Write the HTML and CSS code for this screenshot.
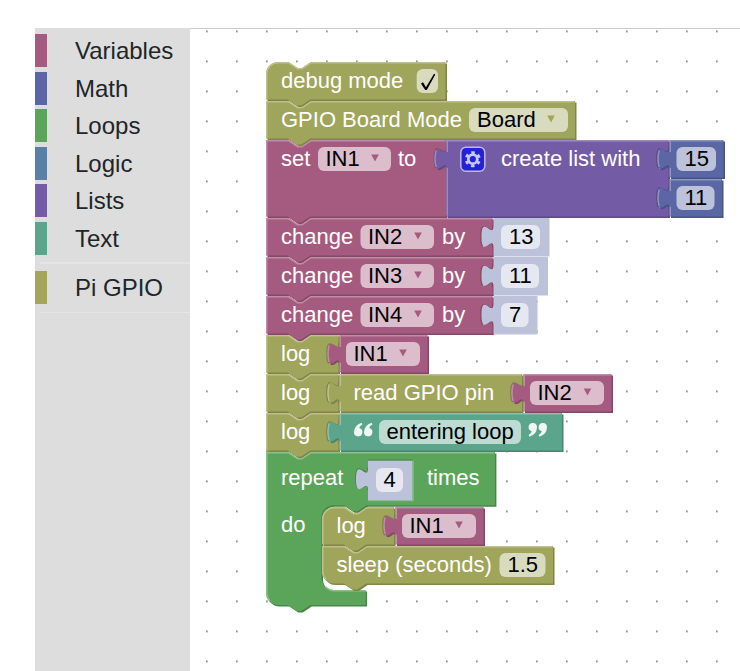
FILE: index.html
```html
<!DOCTYPE html>
<html lang="en">
<head>
<meta charset="utf-8">
<title>Pi GPIO Blocks</title>
<link rel="stylesheet" href="styles.css">
</head>
<body>
<main class="editor">
  <nav class="toolbox">
    <div class="category variables">Variables</div>
    <div class="category math">Math</div>
    <div class="category loops">Loops</div>
    <div class="category logic">Logic</div>
    <div class="category lists">Lists</div>
    <div class="category text">Text</div>
    <div class="separator"></div>
    <div class="category gpio">Pi GPIO</div>
    <div class="separator end"></div>
  </nav>
  <svg class="workspace" id="workspace" width="550" height="642" viewBox="190 29 550 642">
    <defs>
      <pattern id="grid" x="206" y="30.5" width="30" height="30" patternUnits="userSpaceOnUse">
        <rect class="dot" width="1.7" height="1.7"/>
      </pattern>
    </defs>
    <rect x="190" y="29" width="550" height="642" fill="url(#grid)"/>
  </svg>
</main>
<script src="blocks.js"></script>
</body>
</html>
```
FILE: styles.css
```css
body {
  margin: 0;
  background: #fff;
  font-family: "Liberation Sans", Arial, sans-serif;
}
.editor {
  display: flex;
  box-sizing: border-box;
  height: 671px;
  padding: 28px 0 0 35px;
  overflow: hidden;
}
.toolbox {
  display: flex;
  flex-direction: column;
  box-sizing: border-box;
  width: 155px;
  flex: none;
  padding-top: 6px;
  background: #ddd;
}
.category {
  box-sizing: border-box;
  height: 33px;
  margin-bottom: 4.5px;
  padding-left: 28px;
  border-left: 12px solid;
  font-size: 24px;
  line-height: 33px;
  white-space: nowrap;
  color: #212529;
}
.variables { border-color: #a55b80; }
.math { border-color: #5b67a5; }
.loops { border-color: #5ba55b; }
.logic { border-color: #5b80a5; }
.lists { border-color: #745ba5; }
.text { border-color: #5ba58c; }
.gpio { border-color: #a5a55b; }
.separator {
  height: 2px;
  margin: 3px 0 7px 5px;
  background: #e5e5e5;
}
.separator.end {
  height: 1px;
}
.workspace {
  display: block;
  flex: none;
  border-top: 1px solid #ccc;
}
.dot { fill: #808080; }
.label, .value { font-size: 22px; }
.label { fill: #fff; }
.value { fill: #000; }
.field { fill: #fff; fill-opacity: .6; }
.light { fill: none; stroke-width: 1; }
.tick { fill: #000; }
.gear-box { fill: #2222dd; stroke: #c1b7d8; stroke-width: 1.5; }
.gear { fill: none; stroke: #c9c8f3; }
.quote { fill: #fff; fill-opacity: .9; }
```
FILE: blocks.js
```js
const NS = "http://www.w3.org/2000/svg";
const workspace = document.getElementById("workspace");

// Each hue: body, lower-right shade, upper-left highlight
const HUES = {
  gpio: ["#9fa55b", "#7f8449", "#bcc08c"],
  vars: ["#a55b80", "#844966", "#c08ca6"],
  math: ["#5b67a5", "#495284", "#8c95c0"],
  lists: ["#745ba5", "#5d4984", "#9e8cc0"],
  text: ["#5ba58c", "#498470", "#8cc0ae"],
  loops: ["#5ba55b", "#498449", "#8cc08c"],
  shadow: ["#bdc2db", null, "#bdc2db"]
};

function add(tag, attrs, text) {
  const el = document.createElementNS(NS, tag);
  for (const key in attrs) el.setAttribute(key, attrs[key]);
  if (text) el.textContent = text;
  workspace.appendChild(el);
  return el;
}

// Block outlines are in block units, one unit is 1.5px
function shape(hue, x, y, body, light) {
  const [fill, dark, bright] = HUES[hue];
  const at = `translate(${x} ${y}) scale(1.5)`;
  if (dark) add("path", { d: body, fill: dark, transform: at + " translate(1 1)" });
  add("path", { d: body, fill: fill, transform: at });
  if (dark) add("path", { d: light, class: "light", stroke: bright, transform: at });
}

const NOTCH = "l 6,4 3,0 6,-4";
const NOTCH_BACK = "H 29.5 l -6,4 -3,0 -6,-4";

function statement(hue, x, y, right, h = 25, round = "") {
  const w = (right - x) / 1.5 - 1;
  const start = round.includes("t") ? "M 0,8 A 8,8 0 0,1 8,0" : "M 0,0";
  const end = round.includes("b") ? `H 8 a 8,8 0 0,1 -8,-8 z` : "H 0 z";
  const edge = round.includes("t")
    ? `M 0.5,${h - 0.5} V 8 A 7.5,7.5 0 0,1 8,0.5`
    : `M 0.5,${h - 0.5} V 0.5`;
  shape(hue, x, y, `${start} H 15 ${NOTCH} H ${w} v ${h} ${NOTCH_BACK} ${end}`,
    `${round.includes("b") ? `M 2.7,${h - 2.7} A 7.5,7.5 0 0,1 0.5,${h - 8} V 0.5` : edge} H 15 ${NOTCH} H ${w - 0.5}`);
}

// Recess in the parent, drawn beneath a plugged-in value block
function socket(hue, x, y) {
  const [, dark, bright] = HUES[hue];
  const at = `translate(${x - 0.6} ${y}) scale(1.5)`;
  add("path", { d: "M 0,5 c 0,10 -8,-8 -8,7.5 s 8,-2.5 8,7.5", class: "light", stroke: dark, transform: at });
  add("path", { d: "M -6.6,19.3 l 3.7,-2.1", class: "light", stroke: bright, transform: at });
}

function value(hue, x, y, right, h = 25) {
  const shadow = hue === "shadow";
  const w = (right - x) / 1.5 - (shadow ? 0 : 1);
  const height = shadow ? h + 0.7 : h;
  const body = `M 0,0 H ${w} v ${height} H 0 V 20 c 0,-10 -8,8 -8,-7.5 s 8,2.5 8,-7.5 z`;
  shape(hue, x, y, body,
    `M 0.5,${h - 0.5} V 18.5 m -7.4,-0.5 q -1.5,-5.5 0,-11 m 7.4,1 V 0.5 H ${w - 0.5}`);
}

function label(x, y, text) { add("text", { x, y, class: "label" }, text); }

function field(x, right, y, text, tx, arrow, color = "#a55b80") {
  add("rect", { x, y, width: right - x, height: 24, rx: 6, class: "field" });
  if (text) add("text", { x: tx, y: y + 19, class: "value" }, text);
  if (arrow) add("path", { d: `M ${arrow - 3.8},${y + 7.5} h 7.6 l -3.8,7 z`, fill: color });
}

// debug mode
statement("gpio", 266, 62, 447, 25, "t");
label(281, 88, "debug mode");
field(416.7, 438, 69);
add("path", { d: "M 421,83.6 L 423,82.2 L 426,87.2 L 434,73.8 L 435.3,74.4 L 426.8,90 L 425.2,90 z", class: "tick" });

// board mode
statement("gpio", 266, 101, 576.5);
label(281, 127, "GPIO Board Mode");
field(469, 568, 108, "Board", 477, 551, "#9fa55b");

// set IN1 to list
statement("vars", 266, 140, 447.5, 51);
label(281, 166, "set");
field(318, 391, 147, "IN1", 325.5, 375);
label(398, 166, "to");
socket("vars", 447, 140);
value("lists", 446.5, 140, 670, 51);
add("rect", { x: 460.8, y: 147.2, width: 24, height: 24, rx: 5, class: "gear-box" });
add("circle", { cx: 472.8, cy: 159.2, r: 4.5, "stroke-width": 2.8, class: "gear" });
add("circle", { cx: 472.8, cy: 159.2, r: 6.6, "stroke-width": 2.8, "stroke-dasharray": "3.4 3.512", "stroke-dashoffset": "1.7", class: "gear", transform: "rotate(30 472.8 159.2)" });
label(501, 166, "create list with");
socket("lists", 669.5, 140);
value("math", 669.5, 140, 725, 25);
field(676.5, 716, 147, "15", 684.5);
socket("lists", 669.5, 179);
value("math", 669.5, 179, 723.5, 25);
field(676.5, 714.5, 186, "11", 684.5);

// change INx by n
[["IN2", "13", 218, 549.5, 540], ["IN3", "11", 257, 548, 539], ["IN4", "7", 296, 537.5, 528.5]]
  .forEach(([name, n, y, right, fieldRight]) => {
    statement("vars", 266, y, 494);
    label(281, y + 26, "change");
    field(360.5, 434, y + 7, name, 368, 418);
    label(442, y + 26, "by");
    socket("vars", 493.5, y);
    value("shadow", 493.5, y, right);
    field(501, fieldRight, y + 7, n, 509);
  });

// log IN1
statement("gpio", 266, 335, 340);
label(281, 361, "log");
socket("gpio", 339.5, 335);
value("vars", 339.5, 335, 429);
field(346, 420, 342, "IN1", 353.5, 403);

// log read GPIO pin
statement("gpio", 266, 374, 340);
label(281, 400, "log");
socket("gpio", 339.5, 374);
value("gpio", 339.5, 374, 523.5);
label(353.5, 400, "read GPIO pin");
socket("gpio", 523.5, 374);
value("vars", 523.5, 374, 613);
field(530, 604, 381, "IN2", 537.5, 587.5);

// log text
statement("gpio", 266, 413, 340);
label(281, 439, "log");
socket("gpio", 339.5, 413);
value("text", 339.5, 413, 563.5);
[354, 364].forEach(x =>
  add("path", { d: `M ${x},432.2 a 4.2,4.2 0 1,0 5.2,-4.1 q .5,-2.4 3.2,-3.6 l -.8,-1.8 q -7.4,2.4 -7.6,9.5 z`, class: "quote" }));
[537, 547].forEach(x =>
  add("path", { d: `M ${x},427.2 a 4.2,4.2 0 1,0 -5.2,4.1 q -.5,2.4 -3.2,3.6 l .8,1.8 q 7.4,-2.4 7.6,-9.5 z`, class: "quote" }));
field(379, 521, 420, "entering loop", 386.5);

// repeat 4 times
const loopBottom = "H 66.4 v 10 " + NOTCH_BACK + " H 8 a 8,8 0 0,1 -8,-8 z";
shape("loops", 266, 452,
  `M 0,0 H 15 ${NOTCH} H 152.6 v 35.5 H 67 l -6,4 -3,0 -6,-4 h -7 a 8,8 0 0,0 -8,8 v 40.5 a 8,8 0 0,0 8,8 ${loopBottom}`,
  `M 2.7,99.3 A 7.5,7.5 0 0,1 0.5,94 V 0.5 H 15 ${NOTCH} H 152 M 39.7,90 A 8.5,8.5 0 0,0 45,92.5 H 66`);
label(281, 485, "repeat");
socket("loops", 368.5, 460);
value("shadow", 368, 460.5, 412.5, 26);
add("path", { d: "M 368,500.7 H 413.2 V 460.5", class: "light", stroke: "#8cc08c" });
add("path", { d: "M 368,460 H 413", class: "light", stroke: "#498449" });
field(376, 403, 468, "4", 383.5);
label(427, 485, "times");
label(281, 532, "do");

// loop body
statement("gpio", 322, 507, 395.5, 25, "t");
label(336.5, 533, "log");
socket("gpio", 395.5, 507);
value("vars", 395.5, 507, 485);
field(402, 476, 514, "IN1", 409.5, 459);
statement("gpio", 322, 546, 554.5, 25, "b");
label(336.5, 572, "sleep (seconds)");
field(499.5, 545.5, 553, "1.5", 507.5);
```
